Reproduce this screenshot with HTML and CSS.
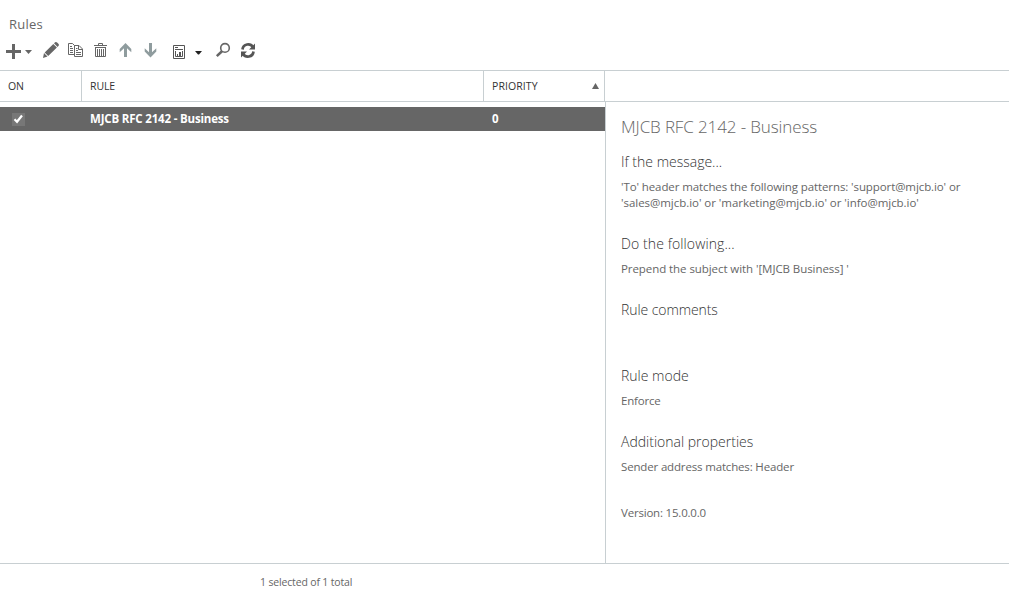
FILE: index.html
```html
<!DOCTYPE html>
<html lang="en">
<head>
<meta charset="utf-8">
<title>Rules</title>
<link rel="stylesheet" href="styles.css">
</head>
<body>
<main class="app">
  <h1 class="title"><span>Rules</span></h1>
  <nav class="toolbar">
    <svg width="23" height="24" viewBox="0 38 23 24"><path fill="#666" d="M12 44h3v6h6v3h-6v6h-3v-6H6v-3h6z"/></svg>
    <svg width="16" height="24" viewBox="23 38 16 24"><path fill="#666" d="M25 50h7l-3.500 4z"/></svg>
    <svg width="24" height="24" viewBox="39 38 24 24"><path fill="#666" d="M54 43.2l1.1-1q1-.7 2 .2l1.500 1.500q.8.9 0 1.900l-1.100 1.100zM53.3 43.900l3.600 3.600-8.700 8.400-3.500-3.500zM44 53.100l3.500 3.400-4.500 1.500z"/></svg>
    <svg width="25" height="24" viewBox="63 38 25 24"><g fill="#fff" stroke="#666"><path d="M68.500 43.500h4l3 3v8h-7z"/><path d="M74.500 45.500h4.500l3.500 3.500v7.500h-8z"/><path fill="none" d="M78.500 45.500v4h4M70 46.500h2M70 48.500h3M70 50.500h3M70 52.500h3M76 48.500h1.500M76 50.500h2M76 52.500h5M76 54.500h5"/></g></svg>
    <svg width="25" height="24" viewBox="88 38 25 24"><path fill="none" stroke="#666" d="M94 45.500h13M98.500 45v-1.500h4V45M95.500 47v9.500h10V47M95 47.500h11M97.500 49v7M99.500 49v7M101.500 49v7M103.500 49v7"/></svg>
    <svg width="25" height="24" viewBox="113 38 25 24"><path fill="#8f9c9e" d="M125.500 43l5.800 6v3.200L127 48.200V57h-3v-8.800l-4.300 4V49z"/></svg>
    <svg width="25" height="24" viewBox="138 38 25 24"><path fill="#8f9c9e" d="M150.500 57.500l5.800-6v-3.200L152 52.300V43h-3v9.300l-4.300-4v3.200z"/></svg>
    <svg width="27" height="24" viewBox="163 38 27 24"><path fill="none" stroke="#555" d="M173.500 45.500h11v13h-11zM175 47.500h3M175 49.500h8M175.500 51v5.500h7V51"/><path fill="#555" d="M177 54h1v3h-1zM179 52h2v5h-2z"/></svg>
    <svg width="19" height="24" viewBox="190 38 19 24"><path fill="#222" d="M195 51h7l-3 3.500h-1z"/></svg>
    <svg width="27" height="24" viewBox="209 38 27 24"><circle cx="225" cy="47.900" r="4.300" fill="none" stroke="#666" stroke-width="1.600"/><path stroke="#666" stroke-width="2.600" d="M222 51.300l-5.200 4.800"/></svg>
    <svg width="26" height="24" viewBox="236 38 26 24"><g fill="none" stroke="#555" stroke-width="2.700"><path d="M242.500 49.500c.6-6 8-6.500 10.300-2.500M253.500 51.500c-.6 6-8 6.500-10.300 2.500"/></g><path fill="#555" d="M255 43.500v6h-6zM241 57.500v-6h6z"/></svg>
  </nav>
  <div class="columns">
    <div class="col col-on"><span>ON</span></div>
    <div class="col col-rule"><span>RULE</span></div>
    <div class="col col-priority"><span>PRIORITY</span><svg width="7" height="6" viewBox="0 0 7 6"><path fill="#666" d="M3.500 0L7 6H0z"/></svg></div>
  </div>
  <div class="content">
    <section class="list">
      <div class="row">
        <div class="cell-on"><svg width="13" height="13" viewBox="0 0 13 13"><path fill="#777" d="M0 0h13v13H0z"/><path fill="none" stroke="#fff" stroke-width="2.200" d="M2.500 6.300l2.500 2.500 5-6.300"/></svg></div>
        <div class="cell-rule"><span>MJCB RFC 2142 - Business</span></div>
        <div class="cell-priority"><span>0</span></div>
      </div>
    </section>
    <section class="details">
      <h2 class="name"><span>MJCB RFC 2142 - Business</span></h2>
      <h3 class="heading"><span>If the message...</span></h3>
      <p class="text"><span class="t-to">'To' header matches the following patterns: 'support@mjcb.io' or</span><br><span class="t-sales">'sales@mjcb.io' or 'marketing@mjcb.io' or 'info@mjcb.io'</span></p>
      <h3 class="heading"><span class="h-do">Do the following...</span></h3>
      <p class="text"><span class="t-prepend">Prepend the subject with '[MJCB Business] '</span></p>
      <h3 class="heading"><span class="h-comments">Rule comments</span></h3>
      <p class="text"></p>
      <h3 class="heading"><span>Rule mode</span></h3>
      <p class="text"><span class="t-enforce">Enforce</span></p>
      <h3 class="heading"><span>Additional properties</span></h3>
      <p class="text"><span class="t-sender">Sender address matches: Header</span></p>
      <p class="text version"><span class="t-version">Version: 15.0.0.0</span></p>
    </section>
  </div>
  <footer class="footer"><span>1 selected of 1 total</span></footer>
</main>
</body>
</html>
```
FILE: styles.css
```css
* { box-sizing: border-box; margin: 0; padding: 0; }
body { background: #fff; color: #666; font: 11.5px/16px "Open Sans", "Noto Sans", sans-serif; }
svg { display: block; flex: none; }
.app { width: 1009px; height: 600px; display: flex; flex-direction: column; overflow: hidden; white-space: nowrap; }
.title { height: 38px; padding: 14px 0 0 9px; font-size: 13px; line-height: 20px; font-weight: 400; letter-spacing: .2px; }
.toolbar { display: flex; height: 32px; }
.columns { display: flex; height: 32px; border-top: 1px solid #c8cfd2; border-bottom: 1px solid #c8cfd2; color: #333; font-size: 10.5px; }
.col { display: flex; align-items: center; padding-left: 8px; border-right: 1px solid #c8cfd2; letter-spacing: -.1px; }
.col-on { width: 82px; }
.col-rule { width: 402px; }
.col-priority { width: 121px; justify-content: space-between; padding-right: 5px; letter-spacing: .08px; }
.content { display: flex; height: 461px; }
.list { width: 605px; padding-top: 5px; }
.row { display: flex; align-items: center; height: 24px; background: #666; color: #fff; font-weight: 700; font-size: 11.5px; }
.cell-on { width: 82px; padding-left: 12px; }
.cell-rule { width: 402px; padding-left: 8px; letter-spacing: -.18px; }
.cell-priority { padding-left: 8px; }
.details { flex: 1; border-left: 1px solid #c8cfd2; padding: 13px 0 0 15px; }
.name { height: 35px; font-size: 17px; line-height: 24px; font-weight: 300; letter-spacing: -.12px; }
.heading { height: 29px; color: #333; font-size: 14px; line-height: 24px; font-weight: 300; }
.h-do { letter-spacing: .1px; }
.h-comments { letter-spacing: -.08px; }
.text { min-height: 16px; margin-bottom: 21px; }
.t-to { letter-spacing: -.1px; }
.t-sales { letter-spacing: -.04px; }
.t-prepend { letter-spacing: -.07px; }
.t-enforce { letter-spacing: -.2px; }
.t-sender { letter-spacing: -.16px; }
.t-version { letter-spacing: -.2px; }
.version { margin-top: 30px; }
.footer { height: 37px; border-top: 1px solid #c8cfd2; padding: 10px 0 0 260px; font-size: 10.5px; letter-spacing: -.16px; }
```
